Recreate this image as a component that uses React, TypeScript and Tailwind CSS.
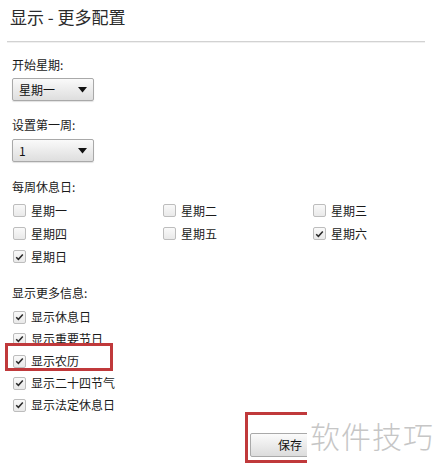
import * as React from "react"

const font = { fontFamily: '"Noto Sans CJK SC", "Liberation Sans", sans-serif' }

function Select({ value }: { value: string }) {
	return (
		<div className="ml-[12px] flex h-[23px] w-[82px] items-center justify-between rounded-[2px] border border-[#a9a9a9] bg-gradient-to-b from-[#fafafa] to-[#dedede] pl-[6px] pr-[6px] text-[12px] text-[#111] shadow-[0_1px_1px_rgba(0,0,0,0.12)]">
			<span>{value}</span>
			<svg width="9" height="6" viewBox="0 0 9 6">
				<path d="M0 0 L9 0 L4.5 5.5 Z" fill="#111" />
			</svg>
		</div>
	)
}

function Checkbox({ checked, label }: { checked: boolean; label: string }) {
	return (
		<div className="flex items-center gap-[5px]">
			<span className="flex h-[13px] w-[13px] items-center justify-center rounded-[2px] border border-[#bdbdbd] bg-gradient-to-b from-[#f9f9f9] to-[#e9e9e9]">
				{checked && (
					<svg width="9" height="8" viewBox="0 0 9 8">
						<path d="M1.2 4.2 L3.4 6.3 L7.8 1.4" fill="none" stroke="#2a2a2a" strokeWidth="1.5" />
					</svg>
				)}
			</span>
			<span className="text-[12px] text-[#1a1a1a]">{label}</span>
		</div>
	)
}

const restDays = [
	{ label: "星期一", checked: false },
	{ label: "星期二", checked: false },
	{ label: "星期三", checked: false },
	{ label: "星期四", checked: false },
	{ label: "星期五", checked: false },
	{ label: "星期六", checked: true },
	{ label: "星期日", checked: true },
]

const moreInfo = ["显示休息日", "显示重要节日", "显示农历", "显示二十四节气", "显示法定休息日"]

export default function App() {
	return (
		<div className="relative h-[465px] w-[439px] overflow-hidden bg-white" style={font}>
			{/* Header */}
			<div className="h-[41px] px-[10px] pt-[5px] text-[17px] leading-[23px] text-[#2b2b2b]">显示 - 更多配置</div>
			<div className="ml-[7px] h-[2px] w-[418px] border-t border-b border-t-[#d2d2d2] border-b-[#f0f0f0]" />

			{/* Start day */}
			<div className="mt-[13px] pl-[12px] text-[12px] leading-[18px] text-[#1a1a1a]">开始星期:</div>
			<div className="mt-[4px]">
				<Select value="星期一" />
			</div>

			{/* First week */}
			<div className="mt-[15px] pl-[12px] text-[12px] leading-[18px] text-[#1a1a1a]">设置第一周:</div>
			<div className="mt-[5px]">
				<Select value="1" />
			</div>

			{/* Rest days */}
			<div className="mt-[16px] pl-[12px] text-[12px] leading-[18px] text-[#1a1a1a]">每周休息日:</div>
			<div className="mt-[3px] grid grid-cols-[150px_150px_1fr] pl-[13px]">
				{restDays.map((d) => (
					<div key={d.label} className="flex h-[23px] items-center">
						<Checkbox checked={d.checked} label={d.label} />
					</div>
				))}
			</div>

			{/* More info */}
			<div className="mt-[16px] pl-[12px] text-[12px] leading-[18px] text-[#1a1a1a]">显示更多信息:</div>
			<div className="mt-[4px] flex flex-col pl-[13px]">
				{moreInfo.map((m) => (
					<div key={m} className="flex h-[22px] items-center">
						<Checkbox checked label={m} />
					</div>
				))}
			</div>

			{/* Save */}
			<div className="mt-[17px] pl-[250px]">
				<button className="flex h-[24px] w-[80px] items-center justify-center rounded-[2px] border border-[#a9a9a9] bg-gradient-to-b from-[#fbfbfb] to-[#dcdcdc] text-[12px] text-[#111]">
					保存
				</button>
			</div>

			{/* Annotation boxes */}
			<div className="absolute left-[5px] top-[343px] h-[28px] w-[108px] border-[3px] border-[#c0393b]" />
			<div className="absolute left-[245px] top-[412px] h-[51px] w-[80px] border-[3px] border-[#c0393b]" />

			{/* Watermark */}
			<div className="absolute left-[307px] top-[405px] flex h-[60px] w-[132px] items-center bg-white pl-[3px] text-[30px] font-light leading-none tracking-[1px] text-[#c6c6c6]">
				软件技巧
			</div>
		</div>
	)
}
